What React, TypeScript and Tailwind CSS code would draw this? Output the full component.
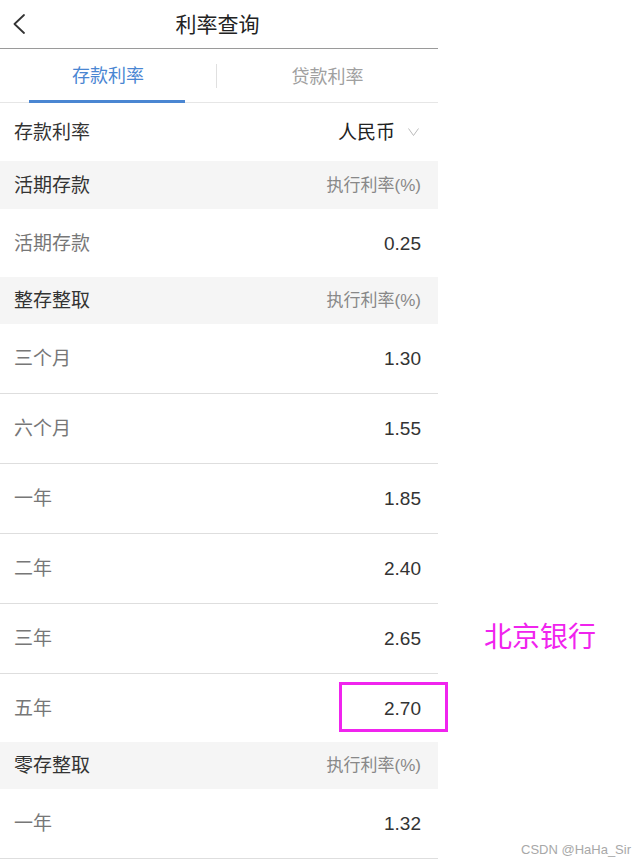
import React from "react";

const font = { fontFamily: '"Liberation Sans", "Noto Sans CJK SC", sans-serif' };

function Section({ title }: { title: string }) {
  return (
    <div className="h-[47px] bg-[#f5f5f5] flex items-center justify-between pl-[14px] pr-[17px]">
      <span className="text-[19px] text-[#333] leading-none">{title}</span>
      <span className="text-[17px] text-[#888] leading-none">执行利率(%)</span>
    </div>
  );
}

function Row({ label, value, last, h }: { label: string; value: string; last?: boolean; h?: string }) {
  return (
    <div
      className={
        "flex items-center justify-between pl-[14px] pr-[17px] " +
        (h ? h : "h-[70px]") +
        (last ? "" : " border-b border-[#dedede]")
      }
    >
      <span className="text-[19px] text-[#777] leading-none">{label}</span>
      <span className="text-[19px] text-[#333] leading-none">{value}</span>
    </div>
  );
}

export default function App() {
  return (
    <div className="relative flex w-[643px] h-[867px] bg-white overflow-hidden" style={font}>
      <div className="w-[438px] flex flex-col">
        {/* header */}
        <div className="h-[49px] border-b border-[#9a9a9a] grid grid-cols-[48px_1fr_48px] items-center">
          <div className="pl-[13px] flex items-center">
            <svg width="12" height="20" viewBox="0 0 12 20" fill="none">
              <polyline points="11,1 1.5,10 11,19" stroke="#333" strokeWidth="1.8" strokeLinecap="round" strokeLinejoin="round" />
            </svg>
          </div>
          <div className="text-center text-[21px] text-[#222] leading-none -ml-[3px]">利率查询</div>
          <div />
        </div>

        {/* tabs */}
        <div className="h-[54px] border-b border-[#e6e6e6] flex items-stretch">
          <div className="w-[216px] flex flex-col items-center">
            <div className="flex-1 flex items-center text-[18px] text-[#4a86d2] leading-none pt-[2px]">存款利率</div>
            <div className="w-[156px] h-[3px] bg-[#4a86d2] -mb-[1px] -ml-[2px]" />
          </div>
          <div className="w-px self-center h-[24px] bg-[#e0e0e0]" />
          <div className="flex-1 flex items-center justify-center text-[18px] text-[#a0a0a0] leading-none pt-[2px]">
            贷款利率
          </div>
        </div>

        {/* currency */}
        <div className="h-[58px] flex items-center justify-between pl-[14px] pr-[19px]">
          <span className="text-[19px] text-[#333] leading-none">存款利率</span>
          <div className="flex items-center gap-[13px]">
            <span className="text-[19px] text-[#222] leading-none">人民币</span>
            <svg width="11" height="8" viewBox="0 0 11 8" fill="none">
              <polyline points="0.5,0.5 5.5,7.5 10.5,0.5" stroke="#bbb" strokeWidth="1" />
            </svg>
          </div>
        </div>

        <div className="h-[48px] bg-[#f5f5f5] flex items-center justify-between pl-[14px] pr-[17px]">
          <span className="text-[19px] text-[#333] leading-none">活期存款</span>
          <span className="text-[17px] text-[#888] leading-none">执行利率(%)</span>
        </div>
        <Row label="活期存款" value="0.25" last h="h-[68px]" />

        <Section title="整存整取" />
        <Row label="三个月" value="1.30" />
        <Row label="六个月" value="1.55" />
        <Row label="一年" value="1.85" />
        <Row label="二年" value="2.40" />
        <Row label="三年" value="2.65" />
        <Row label="五年" value="2.70" last h="h-[68px]" />

        <Section title="零存整取" />
        <Row label="一年" value="1.32" />
      </div>

      {/* annotations */}
      <div className="absolute left-[339px] top-[682px] w-[109px] h-[50px] border-[3px] border-[#f024ee]" />
      <div className="absolute left-[484px] top-[624px] text-[28px] leading-none text-[#f024ee]">北京银行</div>
      <div className="absolute left-[521px] top-[843px] text-[13px] leading-none text-[#a8a8a8]">CSDN @HaHa_Sir</div>
    </div>
  );
}
